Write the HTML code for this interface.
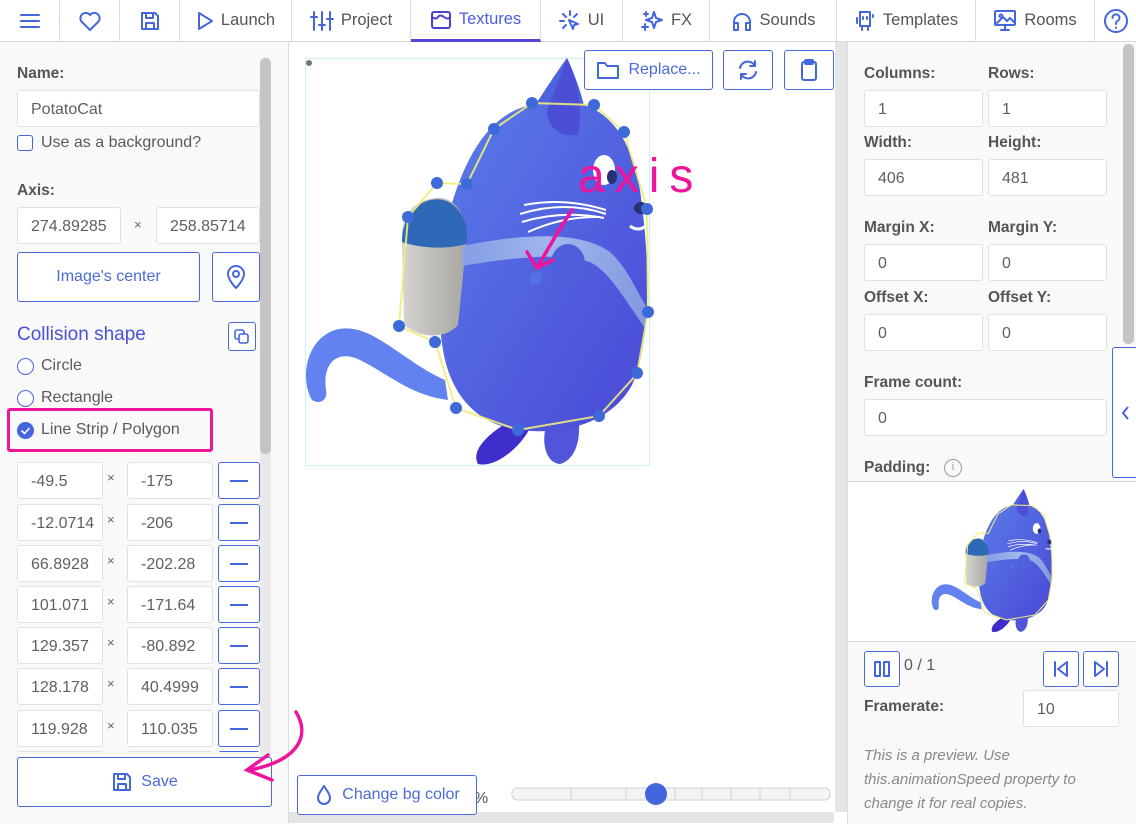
<!DOCTYPE html>
<html><head><meta charset="utf-8"><style>
*{box-sizing:border-box;margin:0;padding:0}
body{width:1136px;height:824px;overflow:hidden;font-family:"Liberation Sans",sans-serif;color:#5a5a5a;background:#fff;position:relative;font-size:16px}
.a{position:absolute}
.top{left:0;top:0;width:1136px;height:42px;border-bottom:1px solid #d8d8d8;background:#fff}
.tab{position:absolute;top:0;height:41px;border-right:1px solid #dcdcdc;display:flex;align-items:center;justify-content:center;gap:7px;font-size:16.5px;color:#555}
.tab svg{stroke:#4466dd;fill:none;stroke-width:2;stroke-linecap:round;stroke-linejoin:round}
.inp{position:absolute;background:#fff;border:1px solid #e1e1e1;border-radius:3px;height:37px;padding-left:13px;line-height:37px;font-size:16px;color:#5f5f5f;overflow:hidden;white-space:nowrap}
.lbl{position:absolute;font-weight:bold;font-size:15.5px;color:#555}
.btn{position:absolute;border:1px solid #4a6ada;border-radius:3px;background:#fff;color:#4a6ada;display:flex;align-items:center;justify-content:center;gap:8px}
.btn svg{stroke:#4466dd;fill:none;stroke-width:2;stroke-linecap:round;stroke-linejoin:round}
.x{position:absolute;font-size:13px;color:#666}
.minus{width:18px;height:2px;background:#4466dd}
</style></head><body>
<div class="a top">
 <div class="tab" style="left:0;width:60px"><svg width="22" height="18"><path d="M2 3h18M2 9h18M2 15h18"/></svg></div>
 <div class="tab" style="left:60px;width:60px"><svg width="24" height="22"><path d="M12 20L3.5 11.5A5 5 0 0 1 12 5a5 5 0 0 1 8.5 6.5z"/></svg></div>
 <div class="tab" style="left:120px;width:60px"><svg width="22" height="22"><path d="M3 3h13l3 3v13H3z M7 3v5h7V3 M7 19v-6h8v6"/></svg></div>
 <div class="tab" style="left:180px;width:112px"><svg width="18" height="22"><path d="M3 3l13 8-13 8z"/></svg>Launch</div>
 <div class="tab" style="left:292px;width:119px"><svg width="24" height="22"><path d="M4 2v18M12 2v18M20 2v18M1 7h6M9 15h6M17 9h6"/></svg>Project</div>
 <div class="tab" style="left:411px;width:130px;color:#4a5fd8;border-bottom:3px solid #5244d6;height:42px"><svg width="22" height="22"><rect x="2" y="3" width="18" height="16" rx="2" stroke="#4a3fd0"/><path d="M2 8q4 3 6 0t6 0 6 0" stroke="#4a3fd0"/></svg>Textures</div>
 <div class="tab" style="left:541px;width:82px"><svg width="22" height="22"><path d="M11 1v4M4 4l3 3M1 11h4M4 18l3-3M18 4l-3 3M10 10l9 4-4 1-1 4z"/></svg>UI</div>
 <div class="tab" style="left:623px;width:87px"><svg width="24" height="22"><path d="M14 2l2 6 6 2-6 2-2 6-2-6-6-2 6-2zM5 14v6M2 17h6M6 2v4M4 4h4"/></svg>FX</div>
 <div class="tab" style="left:710px;width:127px"><svg width="22" height="22"><path d="M3 17v-5a8 8 0 0 1 16 0v5M3 13h4v7H3zM15 13h4v7h-4z"/></svg>Sounds</div>
 <div class="tab" style="left:837px;width:139px"><svg width="22" height="24"><path d="M6 3h10v14H6zM9 8v2M13 8v2M3 9v5M19 6v2M8 17v4M14 17v4"/></svg>Templates</div>
 <div class="tab" style="left:976px;width:119px"><svg width="24" height="24"><rect x="2" y="2" width="20" height="14" rx="1"/><path d="M4 14l6-6 4 4 3-3 5 5M12 16v5M8 21h8"/><circle cx="8" cy="7" r="1.5"/></svg>Rooms</div>
 <div class="tab" style="left:1095px;width:41px;border-right:0"><svg width="26" height="26"><circle cx="13" cy="13" r="11"/><path d="M9.5 10a3.5 3.5 0 1 1 5 3c-1.5.8-1.5 1.5-1.5 3M13 19.5v.5"/></svg></div>
</div>

<!-- left panel -->
<div class="a" style="left:0;top:42px;width:289px;height:782px;background:#f9f9f9;border-right:1px solid #dcdcdc"></div>
<div class="a" style="left:260px;top:58px;width:11px;height:700px;background:#e9e9e9;border-radius:5px"></div>
<div class="a" style="left:260px;top:58px;width:11px;height:396px;background:#c4c4c4;border-radius:5px"></div>
<div class="lbl" style="left:17px;top:65px">Name:</div>
<div class="inp" style="left:17px;top:90px;width:243px">PotatoCat</div>
<div class="a" style="left:17px;top:135px;width:16px;height:16px;border:1.5px solid #4466dd;border-radius:3px;background:#fff"></div>
<div class="a" style="left:41px;top:134px;font-size:16px">Use as a background?</div>
<div class="lbl" style="left:17px;top:182px">Axis:</div>
<div class="inp" style="left:17px;top:207px;width:104px">274.89285</div>
<div class="x" style="left:134px;top:217px">×</div>
<div class="inp" style="left:156px;top:207px;width:104px">258.85714</div>
<div class="btn" style="left:17px;top:252px;width:183px;height:50px;font-size:16px">Image's center</div>
<div class="btn" style="left:212px;top:252px;width:48px;height:50px"><svg width="24" height="28"><path d="M12 25s-8-8-8-14a8 8 0 0 1 16 0c0 6-8 14-8 14z"/><circle cx="12" cy="11" r="3"/></svg></div>
<div class="a" style="left:17px;top:324px;font-size:19px;color:#4b50d6">Collision shape</div>
<div class="btn" style="left:228px;top:322px;width:28px;height:29px"><svg width="18" height="18" style="stroke-width:1.6"><rect x="2" y="2" width="9" height="9" rx="2"/><rect x="6" y="6" width="9" height="9" rx="2" fill="#fff"/></svg></div>
<div class="a" style="left:17px;top:358px;width:17px;height:17px;border:1.5px solid #4466dd;border-radius:50%;background:#fff"></div>
<div class="a" style="left:41px;top:357px">Circle</div>
<div class="a" style="left:17px;top:390px;width:17px;height:17px;border:1.5px solid #4466dd;border-radius:50%;background:#fff"></div>
<div class="a" style="left:41px;top:389px">Rectangle</div>
<div class="a" style="left:17px;top:422px;width:17px;height:17px;border-radius:50%;background:#4466dd"><svg width="17" height="17" style="position:absolute;left:0;top:0"><path d="M4.5 8.5l3 3 5-5.5" stroke="#fff" stroke-width="1.6" fill="none"/></svg></div>
<div class="a" style="left:41px;top:421px">Line Strip / Polygon</div>
<div class="a" style="left:7px;top:408px;width:206px;height:44px;border:3px solid #ee149b;border-radius:3px"></div>

<div class="a" style="left:0;top:462px;width:270px;height:290px;overflow:hidden">
  <div class="inp" style="left:17px;top:0;width:86px">-49.5</div><div class="x" style="left:107px;top:8px">×</div><div class="inp" style="left:127px;top:0;width:86px">-175</div><div class="btn" style="left:218px;top:0;width:42px;height:37px"><div class="minus"></div></div>
  <div class="inp" style="left:17px;top:42px;width:86px">-12.0714</div><div class="x" style="left:107px;top:50px">×</div><div class="inp" style="left:127px;top:42px;width:86px">-206</div><div class="btn" style="left:218px;top:42px;width:42px;height:37px"><div class="minus"></div></div>
  <div class="inp" style="left:17px;top:83px;width:86px">66.8928</div><div class="x" style="left:107px;top:91px">×</div><div class="inp" style="left:127px;top:83px;width:86px">-202.28</div><div class="btn" style="left:218px;top:83px;width:42px;height:37px"><div class="minus"></div></div>
  <div class="inp" style="left:17px;top:124px;width:86px">101.071</div><div class="x" style="left:107px;top:132px">×</div><div class="inp" style="left:127px;top:124px;width:86px">-171.64</div><div class="btn" style="left:218px;top:124px;width:42px;height:37px"><div class="minus"></div></div>
  <div class="inp" style="left:17px;top:165px;width:86px">129.357</div><div class="x" style="left:107px;top:173px">×</div><div class="inp" style="left:127px;top:165px;width:86px">-80.892</div><div class="btn" style="left:218px;top:165px;width:42px;height:37px"><div class="minus"></div></div>
  <div class="inp" style="left:17px;top:206px;width:86px">128.178</div><div class="x" style="left:107px;top:214px">×</div><div class="inp" style="left:127px;top:206px;width:86px">40.4999</div><div class="btn" style="left:218px;top:206px;width:42px;height:37px"><div class="minus"></div></div>
  <div class="inp" style="left:17px;top:248px;width:86px">119.928</div><div class="x" style="left:107px;top:256px">×</div><div class="inp" style="left:127px;top:248px;width:86px">110.035</div><div class="btn" style="left:218px;top:248px;width:42px;height:37px"><div class="minus"></div></div>
  <div class="inp" style="left:17px;top:289px;width:86px"></div><div class="inp" style="left:127px;top:289px;width:86px"></div><div class="btn" style="left:218px;top:289px;width:42px;height:37px"></div>
</div>
<div class="btn" style="left:17px;top:757px;width:255px;height:50px;font-size:16px"><svg width="22" height="22"><path d="M3 3h13l3 3v13H3z M7 3v5h7V3 M7 19v-6h8v6"/></svg>Save</div>

<!-- center -->
<div class="a" style="left:289px;top:812px;width:545px;height:11px;background:#e5e5e5"></div>
<div class="a" style="left:835px;top:42px;width:12px;height:770px;background:#e5e5e5"></div>
<div class="a" style="left:305px;top:58px;width:345px;height:408px;border:1px solid #c7f3f5"></div>
<svg class="a" style="left:0;top:0" width="1136" height="824" viewBox="0 0 1136 824">
 <defs>
  <linearGradient id="bd" x1="0" y1="0" x2="1" y2="1"><stop offset="0" stop-color="#5a7ce9"/><stop offset="1" stop-color="#4a48d6"/></linearGradient>
  <linearGradient id="gr" x1="0" y1="0" x2="1" y2="0"><stop offset="0" stop-color="#d6d4d0"/><stop offset="1" stop-color="#a8a6a2"/></linearGradient>
  <linearGradient id="st" x1="0" y1="0" x2="1" y2="0"><stop offset="0" stop-color="#8aa4e6"/><stop offset=".5" stop-color="#a9c0ef"/><stop offset="1" stop-color="#87a0e0"/></linearGradient>
  <g id="cat">
   <path d="M445 380 C400 360 370 320 335 330 C305 340 300 380 312 400 C320 405 328 400 326 390 C322 360 340 350 360 360 C390 375 410 395 448 400z" fill="#6283ef"/>
   <path d="M512 420 C490 432 470 450 478 464 C495 468 520 448 530 428z" fill="#3f2dcc"/>
   <path d="M548 420 C540 440 545 463 560 464 C575 460 582 440 578 415z" fill="#5055da"/>
   <path d="M532 110 C545 90 558 70 567 58 C575 75 582 95 585 110z" fill="#4c64dc"/>
   <path d="M540 103 C600 92 630 130 640 190 C650 260 652 340 632 385 C610 425 560 435 520 430 C480 425 455 400 445 360 C432 300 440 230 460 180 C480 130 505 108 540 103z" fill="url(#bd)"/>
   <path d="M547 110 C556 88 562 72 567 58 C578 80 583 110 578 135 C560 137 547 128 547 110z" fill="#4c4fd6"/>
   <path d="M402 240 C400 210 420 198 440 198 C460 200 468 222 466 245 L458 325 C445 340 420 338 404 325z" fill="url(#gr)"/>
   <path d="M402 242 C402 210 425 196 443 200 C462 205 470 228 466 244 C445 250 420 248 402 242z" fill="#2e68b6"/>
   <path d="M462 246 C520 234 580 230 610 252 C630 270 640 300 648 308 L645 328 C625 300 610 272 590 262 C560 252 510 258 462 266z" fill="url(#st)" opacity=".9"/>
   <ellipse cx="568" cy="263" rx="17" ry="19" fill="#5060dc"/>
   <rect x="530" y="273" width="11" height="11" fill="#5272e2"/>
   <ellipse cx="604" cy="170" rx="11" ry="15" fill="#fff"/><ellipse cx="612" cy="177" rx="5" ry="7" fill="#283070"/>
   <ellipse cx="641" cy="208" rx="7" ry="6" fill="#283070"/>
   <path d="M630 226 q8 6 16 0" stroke="#fff" stroke-width="3" fill="none"/>
   <path d="M524 205 q40-8 82 5 M520 214 q45-14 86 0 M522 222 q40-12 82-4 M528 232 q35-16 72-15" stroke="#fff" stroke-width="2" fill="none"/>
  </g>
 </defs>
 <use href="#cat"/>
 <path d="M532 103 L594 105 L624 132 L647 208 L648 312 L637 374 L599 416 L518 430 L456 408 L435 342 L399 326 L408 217 L437 183 L467 184 L494 129z" fill="none" stroke="#f0ec7a" stroke-width="2" opacity=".9"/>
 <g fill="#3d6ad8">
  <circle cx="532" cy="103" r="6"/><circle cx="594" cy="105" r="6"/><circle cx="624" cy="132" r="6"/><circle cx="647" cy="209" r="6"/><circle cx="648" cy="312" r="6"/><circle cx="637" cy="373" r="6"/><circle cx="599" cy="416" r="6"/><circle cx="518" cy="430" r="6"/><circle cx="456" cy="408" r="6"/><circle cx="435" cy="342" r="6"/><circle cx="399" cy="326" r="6"/><circle cx="408" cy="217" r="6"/><circle cx="437" cy="183" r="6"/><circle cx="467" cy="184" r="6"/><circle cx="494" cy="129" r="6"/>
 </g>
 <circle cx="309" cy="63" r="3" fill="#777"/>
 <text x="578" y="192" font-family="Liberation Sans, sans-serif" font-size="48" fill="#ee149b" letter-spacing="10">axis</text>
 <path d="M572 210 C560 228 550 245 537 268 M527 252 L537 268 L553 260" stroke="#ee149b" stroke-width="3.5" fill="none" stroke-linecap="round"/>
 <path d="M296 712 C310 735 300 760 250 770 M268 755 L247 770 L272 780" stroke="#ee149b" stroke-width="3.5" fill="none" stroke-linecap="round"/>
 <rect x="512" y="788" width="318" height="12" rx="5" fill="#f4f4f4" stroke="#d2d2d2"/>
 <path d="M571 788v12M626 788v12M675 788v12M702 788v12M731 788v12M760 788v12M790 788v12" stroke="#d2d2d2"/>
 <circle cx="656" cy="794" r="11" fill="#4466dd"/>
 <text x="474" y="803" font-family="Liberation Sans, sans-serif" font-size="16" fill="#555">%</text>
</svg>
<div class="btn" style="left:584px;top:50px;width:129px;height:40px;font-size:16px"><svg width="24" height="20"><path d="M2 3h7l2 3h11v12H2z"/></svg>Replace...</div>
<div class="btn" style="left:723px;top:50px;width:50px;height:40px"><svg width="24" height="22"><path d="M4 9a8 8 0 0 1 15-2M20 13a8 8 0 0 1-15 2M19 2v5h-5M5 20v-5h5"/></svg></div>
<div class="btn" style="left:784px;top:50px;width:50px;height:40px"><svg width="20" height="24"><rect x="3" y="4" width="14" height="18" rx="2"/><rect x="6" y="2" width="8" height="4" rx="1"/></svg></div>
<div class="btn" style="left:297px;top:775px;width:180px;height:40px;font-size:16px"><svg width="20" height="24"><path d="M10 3C6 9 4 12 4 15a6 6 0 0 0 12 0c0-3-2-6-6-12z"/></svg>Change bg color</div>

<!-- right panel -->
<div class="a" style="left:847px;top:42px;width:289px;height:782px;background:#f9f9f9;border-left:1px solid #dcdcdc"></div>
<div class="a" style="left:1123px;top:44px;width:11px;height:300px;background:#c4c4c4;border-radius:5px"></div>
<div class="lbl" style="left:864px;top:65px">Columns:</div><div class="lbl" style="left:988px;top:65px">Rows:</div>
<div class="inp" style="left:864px;top:90px;width:119px">1</div><div class="inp" style="left:988px;top:90px;width:119px">1</div>
<div class="lbl" style="left:864px;top:134px">Width:</div><div class="lbl" style="left:988px;top:134px">Height:</div>
<div class="inp" style="left:864px;top:159px;width:119px">406</div><div class="inp" style="left:988px;top:159px;width:119px">481</div>
<div class="lbl" style="left:864px;top:219px">Margin X:</div><div class="lbl" style="left:988px;top:219px">Margin Y:</div>
<div class="inp" style="left:864px;top:244px;width:119px">0</div><div class="inp" style="left:988px;top:244px;width:119px">0</div>
<div class="lbl" style="left:864px;top:289px">Offset X:</div><div class="lbl" style="left:988px;top:289px">Offset Y:</div>
<div class="inp" style="left:864px;top:314px;width:119px">0</div><div class="inp" style="left:988px;top:314px;width:119px">0</div>
<div class="lbl" style="left:864px;top:374px">Frame count:</div>
<div class="inp" style="left:864px;top:399px;width:243px">0</div>
<div class="lbl" style="left:864px;top:459px">Padding:</div>
<div class="a" style="left:944px;top:459px;width:18px;height:18px;border:1.5px solid #999;border-radius:50%;font-size:11px;text-align:center;line-height:15px;color:#999">i</div>
<div class="a" style="left:1112px;top:347px;width:26px;height:131px;border:1px solid #4466dd;border-right:0;border-radius:3px 0 0 3px;background:#fff"><svg width="24" height="130"><path d="M15 59l-5 6 5 6" stroke="#4466dd" stroke-width="2" fill="none"/></svg></div>
<div class="a" style="left:848px;top:481px;width:288px;height:161px;background:#fff;border-top:1px solid #d8d8d8;border-bottom:1px solid #d8d8d8"></div>
<svg class="a" style="left:928px;top:488px" width="130" height="146" viewBox="300 55 360 415">
 <use href="#cat"/>
 <path d="M532 103 L594 105 L624 132 L647 208 L648 312 L637 374 L599 416 L518 430 L456 408 L435 342 L399 326 L408 217 L437 183 L467 184 L494 129z" fill="none" stroke="#f0ec7a" stroke-width="3"/>
</svg>
<div class="btn" style="left:864px;top:651px;width:36px;height:36px"><svg width="20" height="20"><rect x="3" y="3" width="5" height="14"/><rect x="12" y="3" width="5" height="14"/></svg></div>
<div class="a" style="left:904px;top:657px;font-size:16px">0 / 1</div>
<div class="btn" style="left:1043px;top:651px;width:36px;height:36px"><svg width="20" height="20"><path d="M4 3v14M16 3L7 10l9 7z"/></svg></div>
<div class="btn" style="left:1083px;top:651px;width:36px;height:36px"><svg width="20" height="20"><path d="M16 3v14M4 3l9 7-9 7z"/></svg></div>
<div class="lbl" style="left:864px;top:698px">Framerate:</div>
<div class="inp" style="left:1023px;top:690px;width:96px;height:37px">10</div>
<div class="a" style="left:864px;top:744px;font-size:15px;font-style:italic;color:#888;line-height:24px;width:260px">This is a preview. Use this.animationSpeed property to change it for real copies.</div>
</body></html>
